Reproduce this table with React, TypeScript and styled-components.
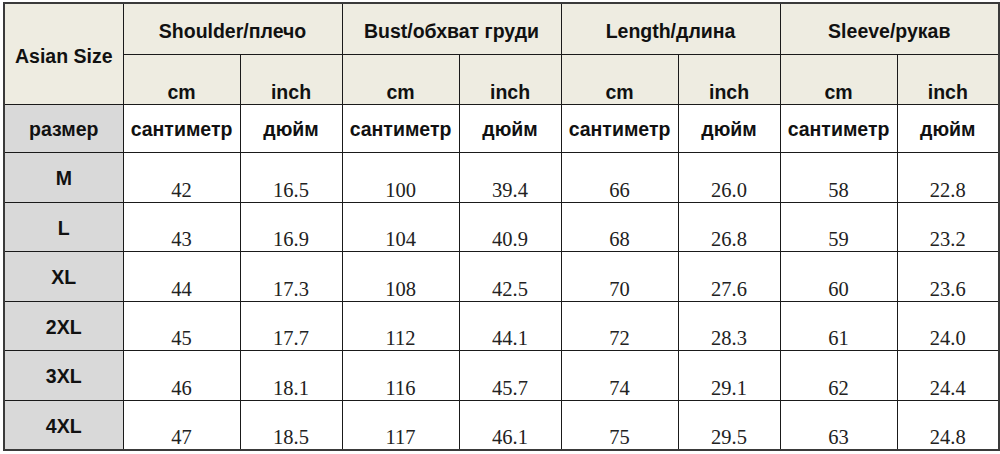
import React from "react";
import styled, { createGlobalStyle } from "styled-components";

const GlobalStyle = createGlobalStyle`
  html, body {
    margin: 0;
    padding: 0;
    background: #ffffff;
  }
`;

const Page = styled.div`
  width: 1000px;
  height: 454px;
  padding: 2px 0 0 3px;
  box-sizing: border-box;
  background: #ffffff;
`;

const Table = styled.table`
  border-collapse: collapse;
  table-layout: fixed;
  width: 995px;
  border: 2px solid #3a3a3a;
  font-family: "Liberation Sans", Arial, sans-serif;
`;

const HeadCell = styled.th<{ $bg?: string; $align?: "top" | "middle" | "bottom" }>`
  border: 1px solid #1a1a1a;
  background: ${(p) => p.$bg || "#eeece1"};
  color: #111;
  font-weight: bold;
  font-size: 19.5px;
  line-height: 22px;
  text-align: center;
  vertical-align: ${(p) => p.$align || "middle"};
  padding: ${(p) => (p.$align === "bottom" ? "0 0 1px" : "5px 0 0")};
  white-space: nowrap;
  overflow: hidden;
`;

const SizeCell = styled.td`
  border: 1px solid #1a1a1a;
  background: #d9d9d9;
  color: #111;
  font-weight: bold;
  font-size: 19.5px;
  line-height: 22px;
  text-align: center;
  vertical-align: middle;
  padding: 2px 0 0;
`;

const ValueCell = styled.td`
  border: 1px solid #1a1a1a;
  background: #ffffff;
  color: #222;
  font-family: "Liberation Serif", "Times New Roman", serif;
  font-size: 20.5px;
  line-height: 22px;
  text-align: center;
  vertical-align: bottom;
  padding: 0 0 1px;
`;

const LabelCell = styled.td`
  border: 1px solid #1a1a1a;
  background: #ffffff;
  color: #111;
  font-weight: bold;
  font-size: 19.5px;
  line-height: 22px;
  text-align: center;
  vertical-align: middle;
  padding: 2px 0 0;
  white-space: nowrap;
`;

const Row = styled.tr<{ $h: number }>`
  height: ${(p) => p.$h}px;
`;

const groups = ["Shoulder/плечо", "Bust/обхват груди", "Length/длина", "Sleeve/рукав"];

const rows: { size: string; values: string[]; h: number }[] = [
  { size: "M", values: ["42", "16.5", "100", "39.4", "66", "26.0", "58", "22.8"], h: 50 },
  { size: "L", values: ["43", "16.9", "104", "40.9", "68", "26.8", "59", "23.2"], h: 49 },
  { size: "XL", values: ["44", "17.3", "108", "42.5", "70", "27.6", "60", "23.6"], h: 50 },
  { size: "2XL", values: ["45", "17.7", "112", "44.1", "72", "28.3", "61", "24.0"], h: 49 },
  { size: "3XL", values: ["46", "18.1", "116", "45.7", "74", "29.1", "62", "24.4"], h: 50 },
  { size: "4XL", values: ["47", "18.5", "117", "46.1", "75", "29.5", "63", "24.8"], h: 50 },
];

const colWidths = [119, 117, 102, 117, 102, 117, 102, 117, 102];

export default function App() {
  return (
    <>
      <GlobalStyle />
      <Page>
        <Table>
          <colgroup>
            {colWidths.map((w, i) => (
              <col key={i} style={{ width: w }} />
            ))}
          </colgroup>
          <thead>
            <Row $h={51}>
              <HeadCell rowSpan={2}>Asian Size</HeadCell>
              {groups.map((g) => (
                <HeadCell key={g} colSpan={2}>
                  {g}
                </HeadCell>
              ))}
            </Row>
            <Row $h={50}>
              {groups.map((g) => (
                <React.Fragment key={g}>
                  <HeadCell $align="bottom">cm</HeadCell>
                  <HeadCell $align="bottom">inch</HeadCell>
                </React.Fragment>
              ))}
            </Row>
          </thead>
          <tbody>
            <Row $h={48}>
              <SizeCell>размер</SizeCell>
              {groups.map((g) => (
                <React.Fragment key={g}>
                  <LabelCell>сантиметр</LabelCell>
                  <LabelCell>дюйм</LabelCell>
                </React.Fragment>
              ))}
            </Row>
            {rows.map((r) => (
              <Row key={r.size} $h={r.h}>
                <SizeCell>{r.size}</SizeCell>
                {r.values.map((v, i) => (
                  <ValueCell key={i}>{v}</ValueCell>
                ))}
              </Row>
            ))}
          </tbody>
        </Table>
      </Page>
    </>
  );
}
